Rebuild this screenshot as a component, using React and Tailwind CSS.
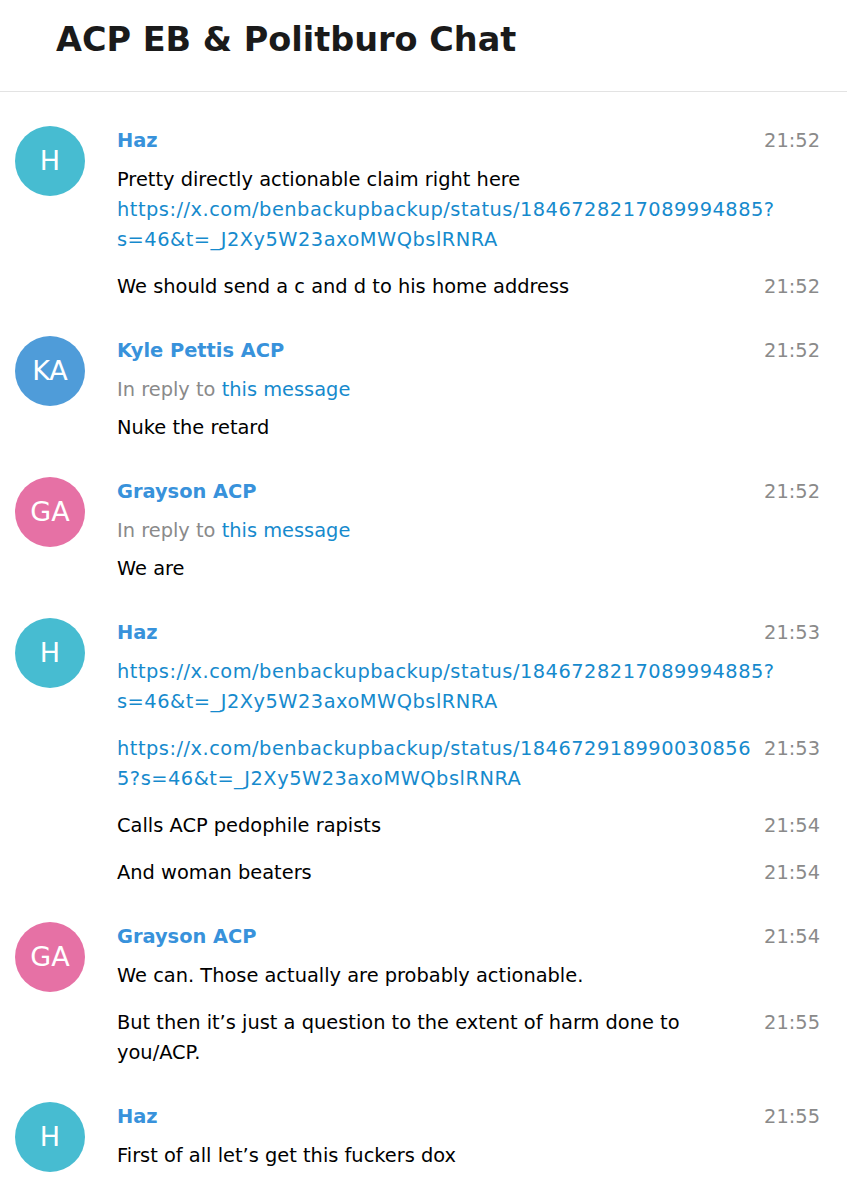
import React from "react";

const groups = [
  {
    name: "Haz",
    initials: "H",
    color: "bg-[#47bcd1]",
    time: "21:52",
    messages: [
      {
        lines: [
          { text: "Pretty directly actionable claim right here" },
          { text: "https://x.com/benbackupbackup/status/1846728217089994885?", link: true },
          { text: "s=46&t=_J2Xy5W23axoMWQbslRNRA", link: true },
        ],
      },
      { time: "21:52", lines: [{ text: "We should send a c and d to his home address" }] },
    ],
  },
  {
    name: "Kyle Pettis ACP",
    initials: "KA",
    color: "bg-[#4f9cd9]",
    time: "21:52",
    reply: true,
    messages: [{ lines: [{ text: "Nuke the retard" }] }],
  },
  {
    name: "Grayson ACP",
    initials: "GA",
    color: "bg-[#e671a5]",
    time: "21:52",
    reply: true,
    messages: [{ lines: [{ text: "We are" }] }],
  },
  {
    name: "Haz",
    initials: "H",
    color: "bg-[#47bcd1]",
    time: "21:53",
    messages: [
      {
        lines: [
          { text: "https://x.com/benbackupbackup/status/1846728217089994885?", link: true },
          { text: "s=46&t=_J2Xy5W23axoMWQbslRNRA", link: true },
        ],
      },
      {
        time: "21:53",
        lines: [
          { text: "https://x.com/benbackupbackup/status/184672918990030856", link: true },
          { text: "5?s=46&t=_J2Xy5W23axoMWQbslRNRA", link: true },
        ],
      },
      { time: "21:54", lines: [{ text: "Calls ACP pedophile rapists" }] },
      { time: "21:54", lines: [{ text: "And woman beaters" }] },
    ],
  },
  {
    name: "Grayson ACP",
    initials: "GA",
    color: "bg-[#e671a5]",
    time: "21:54",
    messages: [
      { lines: [{ text: "We can. Those actually are probably actionable." }] },
      {
        time: "21:55",
        lines: [
          { text: "But then it\u2019s just a question to the extent of harm done to" },
          { text: "you/ACP." },
        ],
      },
    ],
  },
  {
    name: "Haz",
    initials: "H",
    color: "bg-[#47bcd1]",
    time: "21:55",
    messages: [{ lines: [{ text: "First of all let\u2019s get this fuckers dox" }] }],
  },
];

function Lines({ lines }) {
  return (
    <div className="min-w-0 flex-1 whitespace-nowrap">
      {lines.map((l, i) => (
        <div
          key={i}
          className={l.link ? "tracking-[0.5px] text-[#168acd]" : "text-black"}
        >
          {l.text}
        </div>
      ))}
    </div>
  );
}

function Group({ g }) {
  return (
    <div className="flex">
      <div
        className={`ml-[15px] flex h-[70px] w-[70px] shrink-0 items-center justify-center rounded-full ${g.color} text-[27px] text-white`}
      >
        {g.initials}
      </div>
      <div className="ml-[32px] flex flex-1 flex-col gap-[17px]">
        <div>
          <div className="mb-[9px] flex justify-between">
            <span className="font-bold text-[#3892db]">{g.name}</span>
            <span className="text-[#8a8a8a]">{g.time}</span>
          </div>
          {g.reply && (
            <div className="mb-[8px] text-[#8a8a8a]">
              In reply to <span className="text-[#168acd]">this message</span>
            </div>
          )}
          <Lines lines={g.messages[0].lines} />
        </div>
        {g.messages.slice(1).map((m, i) => (
          <div key={i} className="flex justify-between gap-[10px]">
            <Lines lines={m.lines} />
            <span className="shrink-0 text-[#8a8a8a]">{m.time}</span>
          </div>
        ))}
      </div>
    </div>
  );
}

export default function App() {
  return (
    <div className="min-h-[1200px] w-[847px] bg-white font-['DejaVu_Sans',sans-serif] text-[19.4px] leading-[30px]">
      <div className="flex h-[92px] items-center border-b border-[#e3e3e3] pl-[56px]">
        <h1 className="pb-[12px] text-[33.5px] leading-none font-bold text-[#1a1a1a]">
          ACP EB &amp; Politburo Chat
        </h1>
      </div>
      <div className="flex flex-col gap-[34px] pt-[34px] pr-[27px]">
        {groups.map((g, i) => (
          <Group key={i} g={g} />
        ))}
      </div>
    </div>
  );
}
